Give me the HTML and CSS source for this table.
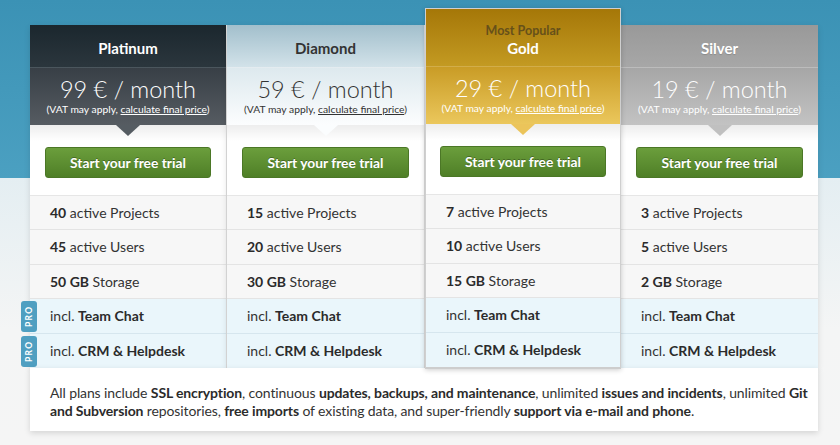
FILE: index.html
```html
<!DOCTYPE html>
<html>
<head>
<meta charset="utf-8">
<link rel="stylesheet" href="styles.css">
</head>
<body>
<div class="page">
  <div class="pricing">
    <div class="plans">
      <div class="plan platinum">
        <div class="name">Platinum</div>
        <div class="price"><div class="amount">99 € / month</div><div class="vat">(VAT may apply, <a>calculate final price</a>)</div></div>
        <div class="cta"><span class="btn">Start your free trial</span></div>
        <div class="row"><b>40</b> active Projects</div>
        <div class="row"><b>45</b> active Users</div>
        <div class="row"><b>50 GB</b> Storage</div>
        <div class="row pro">incl. <b>Team Chat</b><span class="badge">PRO</span></div>
        <div class="row pro">incl. <b>CRM &amp; Helpdesk</b><span class="badge">PRO</span></div>
      </div>
      <div class="plan diamond">
        <div class="name">Diamond</div>
        <div class="price"><div class="amount">59 € / month</div><div class="vat">(VAT may apply, <a>calculate final price</a>)</div></div>
        <div class="cta"><span class="btn">Start your free trial</span></div>
        <div class="row"><b>15</b> active Projects</div>
        <div class="row"><b>20</b> active Users</div>
        <div class="row"><b>30 GB</b> Storage</div>
        <div class="row pro">incl. <b>Team Chat</b></div>
        <div class="row pro">incl. <b>CRM &amp; Helpdesk</b></div>
      </div>
      <div class="plan gold">
        <div class="name"><div class="popular">Most Popular</div>Gold</div>
        <div class="price"><div class="amount">29 € / month</div><div class="vat">(VAT may apply, <a>calculate final price</a>)</div></div>
        <div class="cta"><span class="btn">Start your free trial</span></div>
        <div class="row"><b>7</b> active Projects</div>
        <div class="row"><b>10</b> active Users</div>
        <div class="row"><b>15 GB</b> Storage</div>
        <div class="row pro">incl. <b>Team Chat</b></div>
        <div class="row pro">incl. <b>CRM &amp; Helpdesk</b></div>
      </div>
      <div class="plan silver">
        <div class="name">Silver</div>
        <div class="price"><div class="amount">19 € / month</div><div class="vat">(VAT may apply, <a>calculate final price</a>)</div></div>
        <div class="cta"><span class="btn">Start your free trial</span></div>
        <div class="row"><b>3</b> active Projects</div>
        <div class="row"><b>5</b> active Users</div>
        <div class="row"><b>2 GB</b> Storage</div>
        <div class="row pro">incl. <b>Team Chat</b></div>
        <div class="row pro">incl. <b>CRM &amp; Helpdesk</b></div>
      </div>
    </div>
    <div class="footer">All plans include <b>SSL encryption</b>, continuous <b>updates, backups, and maintenance</b>, unlimited <b>issues and incidents</b>, unlimited <b>Git</b><br><b>and Subversion</b> repositories, <b>free imports</b> of existing data, and super-friendly <b>support via e-mail and phone</b>.</div>
  </div>
</div>
</body>
</html>
```

FILE: styles.css
```css
* { box-sizing: border-box; }
html, body { margin: 0; padding: 0; }
body {
  font-family: "Lato", "Open Sans", sans-serif;
  color: #333;
  width: 840px;
  height: 445px;
  overflow: hidden;
}
.page {
  height: 445px;
  background:
    linear-gradient(to bottom, #3b92b5 0px, #4ba0c1 178px, rgba(0,0,0,0) 178px),
    linear-gradient(to bottom, #e4eef2 178px, #f4f5f5 330px, #f5f5f5 445px);
  padding: 8px 22px 0 30px;
}
.pricing {
  width: 788px;
}
.plans {
  display: flex;
  align-items: flex-end;
}
.plan {
  width: 197px;
  background: #fff;
  border-right: 1px solid #dedede;
  box-shadow: 0 2px 6px rgba(0,0,0,0.12);
  position: relative;
}
.plan.diamond { width: 198px; }
.plan.silver { border-right: none; }
.plan.gold {
  width: 196px;
  border: 1px solid #cfcfcf;
  border-bottom: 2px solid #cdcdcd;
  box-shadow: 0 1px 5px rgba(0,0,0,0.2);
  z-index: 2;
  margin-bottom: -1px;
}
.name {
  height: 43px;
  display: flex;
  flex-direction: column;
  align-items: center;
  justify-content: center;
  font-weight: 700;
  font-size: 15px;
  padding-top: 4px;
  border-bottom: 1px solid rgba(255,255,255,0.18);
}
.gold .name { height: 58px; justify-content: flex-end; padding-bottom: 9px; }
.popular {
  font-size: 12.5px;
  color: #66501a;
  margin-bottom: 1px;
  font-weight: 700;
}
.price {
  height: 57px;
  text-align: center;
  padding-top: 7px;
  position: relative;
}
.price::after {
  content: "";
  position: absolute;
  left: 50%;
  bottom: -11px;
  margin-left: -12px;
  border-left: 12px solid transparent;
  border-right: 12px solid transparent;
  border-top: 11px solid var(--arrow);
}
.amount {
  font-size: 23.5px;
  font-weight: 300;
  line-height: 28px;
}
.vat {
  font-size: 10.3px;
  margin-top: -1px;
  line-height: 14px;
}
.vat a { text-decoration: underline; }
.cta {
  height: 71px;
  padding: 22px 15px 0;
  background: linear-gradient(to bottom, rgba(0,0,0,0.07), rgba(0,0,0,0) 16px), #fff;
  border-bottom: 1px solid #e6e6e6;
}
.btn {
  display: flex;
  align-items: center;
  justify-content: center;
  height: 31px;
  border-radius: 3px;
  background: linear-gradient(to bottom, #6b9e3c, #4f7f27);
  border: 1px solid #4b7726;
  color: #fff;
  font-weight: 700;
  font-size: 13.8px;
  text-shadow: 0 -1px 0 rgba(0,0,0,0.3);
}
.gold .cta { padding-left: 14px; padding-right: 14px; }
.row {
  height: 34.4px;
  line-height: 33px;
  padding-left: 20px;
  font-size: 14px;
  background: #f7f7f7;
  border-bottom: 1px solid #e4e4e4;
  position: relative;
  white-space: nowrap;
}
.row b { font-weight: 700; color: #2b2b2b; }
.row.pro { background: #eaf6fb; border-bottom-color: #d6e6ee; }
.row.pro:last-child { border-bottom: none; }
.badge {
  position: absolute;
  left: -9px;
  top: 2px;
  width: 16px;
  height: 31px;
  background: #4f9fc1;
  border-radius: 3px;
  color: #fff;
  font-size: 8.5px;
  line-height: 16px;
  font-weight: 700;
  letter-spacing: 1.3px;
  text-align: center;
  writing-mode: vertical-rl;
  transform: rotate(180deg);
}

.platinum { --arrow: #555c62; }
.platinum .name { background: linear-gradient(to bottom, #1b272e, #2b363d); color: #fff; border-bottom-color: #4b565d; }
.platinum .price { background: linear-gradient(to bottom, #383f46, #565c62); color: #fff; }
.platinum .vat a { color: #fff; }

.diamond { --arrow: #fbfdfe; }
.diamond .name { background: linear-gradient(to bottom, #a2bfcc, #d2e2e9); color: #333; border-bottom-color: #e4ecf0; }
.diamond .price { background: linear-gradient(to bottom, #dde9ee, #fcfdfe); color: #333; }
.diamond .vat a { color: #333; }

.gold { --arrow: #ebc45a; }
.gold .name { background: linear-gradient(to bottom, #a57708, #c39a22); color: #fff; border-bottom-color: #d2ad4a; }
.gold .price { background: linear-gradient(to bottom, #c99c26, #ebc75c); color: #fff; }
.gold .vat a { color: #fff; }

.silver { --arrow: #c0c0c0; }
.silver .name { background: linear-gradient(to bottom, #999999, #a7a7a7); color: #fff; border-bottom-color: #bcbcbc; text-shadow: 0 1px 1px rgba(0,0,0,0.15); }
.silver .price { background: linear-gradient(to bottom, #a6a6a6, #c3c3c3); color: #fff; }
.silver .vat a { color: #fff; }

.footer {
  background: #fff;
  padding: 16px 10px 0 20px;
  height: 63px;
  font-size: 14px;
  letter-spacing: -0.12px;
  line-height: 18px;
  color: #333;
  white-space: nowrap;
  box-shadow: 0 2px 6px rgba(0,0,0,0.14);
  position: relative;
  z-index: 1;
}
.footer b { font-weight: 700; color: #2b2b2b; }
```
